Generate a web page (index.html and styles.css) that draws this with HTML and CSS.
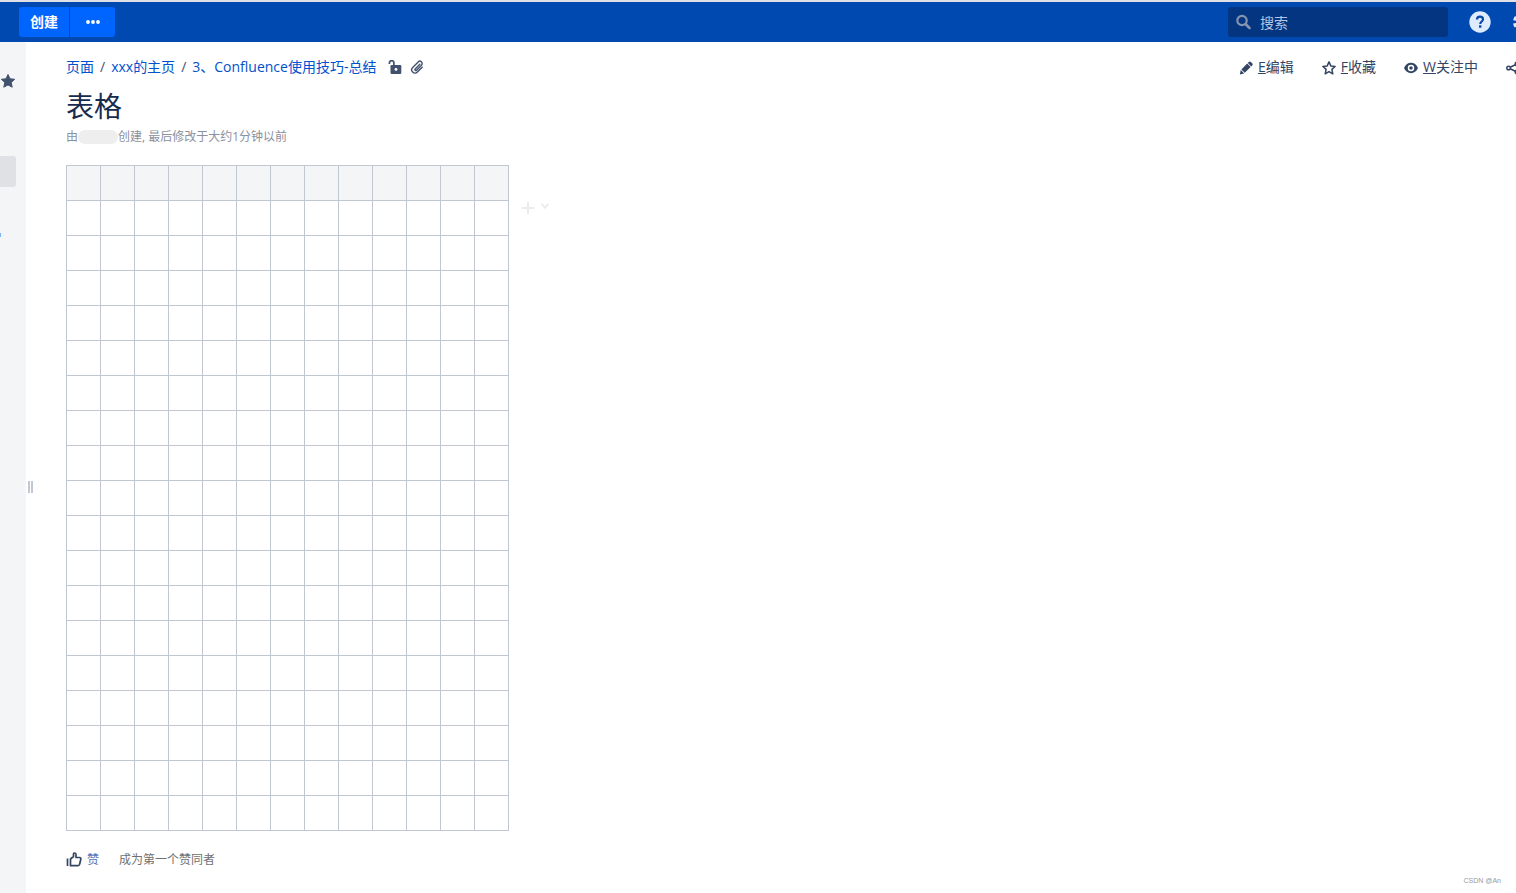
FILE: index.html
```
<!DOCTYPE html>
<html lang="zh-CN">
<head>
<meta charset="utf-8">
<title>表格</title>
<link rel="stylesheet" href="styles.css">
</head>
<body>
<header class="topbar">
  <div class="create-group">
    <button class="create" type="button">创建</button>
    <button class="create more" type="button" aria-label="更多">
      <svg width="14" height="4" viewBox="0 0 14 4" fill="currentColor"><circle cx="2" cy="2" r="1.900"/><circle cx="7" cy="2" r="1.900"/><circle cx="12" cy="2" r="1.900"/></svg>
    </button>
  </div>
  <label class="search">
    <svg width="16" height="16" viewBox="0 0 16 16" fill="none" stroke="currentColor"><circle cx="6" cy="6.500" r="4.700" stroke-width="2.200"/><path d="M9.500 10l4 4" stroke-width="2.600" stroke-linecap="round"/></svg>
    <input type="search" placeholder="搜索" aria-label="搜索">
  </label>
  <button class="icon-button help" type="button" aria-label="帮助">
    <svg width="22" height="22" viewBox="0 0 22 22"><circle cx="11" cy="11" r="10.700" fill="#deebff"/><path d="M8 8.600C8 6.700 9.200 5.700 11 5.700s3 1 3 2.600c0 2.200-2.700 2.300-2.700 4.600" fill="none" stroke="#0747a6" stroke-width="2.200"/><rect x="10" y="14.300" width="2.400" height="2.400" fill="#0747a6"/></svg>
  </button>
  <button class="icon-button settings" type="button" aria-label="设置">
    <svg width="20" height="20" viewBox="0 0 20 20" fill="none" stroke="#deebff"><circle cx="10" cy="10" r="5" stroke-width="4"/><circle cx="10" cy="10" r="8.500" stroke-width="3" stroke-dasharray="3.800 2.876" stroke-dashoffset="-1.440"/></svg>
  </button>
</header>
<div class="workspace">
  <aside class="sidebar">
    <button class="icon-button star" type="button" aria-label="收藏空间">
      <svg width="16" height="16" viewBox="0 0 16 16" fill="currentColor" stroke="currentColor" stroke-linejoin="round"><path d="M8 1.500l2 4.300 4.600.5-3.400 3.200 1 4.700L8 11.900l-4.200 2.300 1-4.700L1.400 6.300 6 5.800z"/></svg>
    </button>
    <div class="selected"></div>
    <div class="mark"></div>
  </aside>
  <div class="splitter"><span class="grip"></span></div>
  <main class="page">
    <div class="page-bar">
      <nav class="crumbs">
        <a href="#">页面</a><span>/</span><a href="#">xxx的主页</a><span>/</span><a href="#">3、Confluence使用技巧-总结</a>
        <svg class="lock" width="14" height="14" viewBox="0 0 14 14"><path d="M1.400 4V2.900a2.200 2.200 0 0 1 4.500 0V6" fill="none" stroke="currentColor" stroke-width="1.700"/><rect x="2.500" y="5" width="10.800" height="9" rx="1.200" fill="currentColor"/><circle cx="8" cy="9.400" r="1.400" fill="#fff"/></svg>
        <svg class="clip" width="14" height="14" viewBox="0 0 14 14" fill="none" stroke="currentColor" stroke-width="1.400" stroke-linecap="round"><path d="M9.800 4.300L5.200 8.900a.9.900 0 0 0 1.300 1.300l5-5a2.300 2.300 0 0 0-3.300-3.300L2.700 7.400a3.300 3.300 0 0 0 4.700 4.700l4.800-4.800"/></svg>
      </nav>
      <div class="actions">
        <a href="#"><svg width="14" height="14" viewBox="0 0 14 14" fill="currentColor"><path d="M.8 13.400l1-4.400 3.400 3.400zM2.400 8.400L8.200 2.600l3.400 3.400-5.800 5.800zM8.800 2l1-1a1.500 1.500 0 0 1 2.100 0l1.300 1.300a1.500 1.500 0 0 1 0 2.100l-1 1z"/></svg><span><u>E</u>编辑</span></a>
        <a href="#"><svg width="14" height="14" viewBox="0 0 14 14" fill="none" stroke="currentColor" stroke-width="1.500" stroke-linejoin="round"><path d="M7 .9l1.800 4 4.300.5-3.200 3 .9 4.400L7 10.600l-3.800 2.200.9-4.400-3.200-3 4.300-.5z"/></svg><span><u>F</u>收藏</span></a>
        <a href="#"><svg width="14" height="14" viewBox="0 0 14 14"><path d="M0 7c1.500-3.400 4-5.200 7-5.200S12.500 3.600 14 7c-1.500 3.400-4 5.200-7 5.200S1.500 10.400 0 7z" fill="currentColor"/><circle cx="7" cy="7" r="2.500" fill="none" stroke="#fff" stroke-width="1.500"/></svg><span><u>W</u>关注中</span></a>
        <a href="#" aria-label="分享"><svg width="14" height="14" viewBox="0 0 14 14" fill="none" stroke="currentColor" stroke-width="1.500"><circle cx="2.600" cy="7" r="1.800"/><circle cx="11" cy="3" r="1.800"/><circle cx="11" cy="11" r="1.800"/><path d="M4.200 6.200l5.200-2.400M4.200 7.800l5.200 2.400"/></svg></a>
      </div>
    </div>
    <h1>表格</h1>
    <p class="byline">由<span class="redacted"></span>创建, 最后修改于大约1分钟以前</p>
    <div class="content">
      <table class="grid">
        <thead>
          <tr><th></th><th></th><th></th><th></th><th></th><th></th><th></th><th></th><th></th><th></th><th></th><th></th><th></th></tr>
        </thead>
        <tbody>
          <tr><td></td><td></td><td></td><td></td><td></td><td></td><td></td><td></td><td></td><td></td><td></td><td></td><td></td></tr>
          <tr><td></td><td></td><td></td><td></td><td></td><td></td><td></td><td></td><td></td><td></td><td></td><td></td><td></td></tr>
          <tr><td></td><td></td><td></td><td></td><td></td><td></td><td></td><td></td><td></td><td></td><td></td><td></td><td></td></tr>
          <tr><td></td><td></td><td></td><td></td><td></td><td></td><td></td><td></td><td></td><td></td><td></td><td></td><td></td></tr>
          <tr><td></td><td></td><td></td><td></td><td></td><td></td><td></td><td></td><td></td><td></td><td></td><td></td><td></td></tr>
          <tr><td></td><td></td><td></td><td></td><td></td><td></td><td></td><td></td><td></td><td></td><td></td><td></td><td></td></tr>
          <tr><td></td><td></td><td></td><td></td><td></td><td></td><td></td><td></td><td></td><td></td><td></td><td></td><td></td></tr>
          <tr><td></td><td></td><td></td><td></td><td></td><td></td><td></td><td></td><td></td><td></td><td></td><td></td><td></td></tr>
          <tr><td></td><td></td><td></td><td></td><td></td><td></td><td></td><td></td><td></td><td></td><td></td><td></td><td></td></tr>
          <tr><td></td><td></td><td></td><td></td><td></td><td></td><td></td><td></td><td></td><td></td><td></td><td></td><td></td></tr>
          <tr><td></td><td></td><td></td><td></td><td></td><td></td><td></td><td></td><td></td><td></td><td></td><td></td><td></td></tr>
          <tr><td></td><td></td><td></td><td></td><td></td><td></td><td></td><td></td><td></td><td></td><td></td><td></td><td></td></tr>
          <tr><td></td><td></td><td></td><td></td><td></td><td></td><td></td><td></td><td></td><td></td><td></td><td></td><td></td></tr>
          <tr><td></td><td></td><td></td><td></td><td></td><td></td><td></td><td></td><td></td><td></td><td></td><td></td><td></td></tr>
          <tr><td></td><td></td><td></td><td></td><td></td><td></td><td></td><td></td><td></td><td></td><td></td><td></td><td></td></tr>
          <tr><td></td><td></td><td></td><td></td><td></td><td></td><td></td><td></td><td></td><td></td><td></td><td></td><td></td></tr>
          <tr><td></td><td></td><td></td><td></td><td></td><td></td><td></td><td></td><td></td><td></td><td></td><td></td><td></td></tr>
          <tr><td></td><td></td><td></td><td></td><td></td><td></td><td></td><td></td><td></td><td></td><td></td><td></td><td></td></tr>
        </tbody>
      </table>
      <button class="icon-button add" type="button" aria-label="添加">
        <svg width="30" height="16" viewBox="0 0 30 16" fill="none" stroke="currentColor" stroke-width="2"><path d="M1 8h12M7 2v12M20.500 4l3.500 3.500L27.500 4"/></svg>
      </button>
    </div>
    <div class="likes">
      <button class="like" type="button">
        <svg width="16" height="16" viewBox="0 0 16 16" fill="none" stroke="#344563" stroke-width="1.700" stroke-linejoin="round"><path d="M1.500 6.500V14M4.500 7L7.500 4.500V2C7.500.6 10 .6 10 2.500v3h3.300c1.200 0 1.700.8 1.500 1.700l-1.200 5c-.3 1-.8 1.500-1.800 1.500H4.500z"/></svg>
        赞
      </button>
      <span>成为第一个赞同者</span>
    </div>
  </main>
</div>
<div class="watermark">CSDN @An</div>
</body>
</html>
```
FILE: styles.css
```
* { box-sizing: border-box; }
body {
  margin: 0;
  min-height: 100vh;
  display: flex;
  flex-direction: column;
  overflow: hidden;
  background: #fff;
  color: #172b4d;
  font: 14px/20px "Open Sans", "Noto Sans CJK SC", sans-serif;
}
button, input { font: inherit; }
svg { display: block; flex: none; }
a { color: #0052cc; text-decoration: none; }
.icon-button { display: block; padding: 0; border: 0; background: none; color: inherit; flex: none; }

.topbar {
  display: flex;
  align-items: center;
  height: 42px;
  padding: 2px 0 0 19px;
  border-top: 2px solid #dfe1e6;
  background: #0049b0;
}
.create-group { display: flex; gap: 1px; margin-bottom: 2px; }
.create {
  width: 50px;
  height: 30px;
  padding: 0;
  border: 0;
  border-radius: 3px 0 0 3px;
  background: #0065ff;
  color: #fff;
  font-weight: 700;
}
.more { display: flex; align-items: center; justify-content: center; width: 45px; border-radius: 0 3px 3px 0; }
.search {
  display: flex;
  align-items: center;
  gap: 8px;
  width: 220px;
  height: 30px;
  margin: 0 21px 2px auto;
  padding: 0 8px;
  border-radius: 3px;
  background: #043580;
  color: #8493ae;
}
.search input { flex: 1; min-width: 0; padding: 1px 0 0; border: 0; outline: 0; background: none; color: #deebff; }
.search input::placeholder { color: #b3c5e4; opacity: 1; }
.help { margin: 0 22px 2px 0; }
.settings { margin: 0 -17px 2px 0; }

.workspace { flex: 1; display: flex; }
.sidebar { width: 26px; padding-top: 31px; background: #f4f5f7; color: #42526e; }
.selected { width: 16px; height: 31px; margin-top: 67px; border-radius: 0 3px 3px 0; background: #dfe1e5; }
.mark { width: 1px; height: 4px; margin-top: 46px; background: #79b8f3; }
.splitter { display: flex; width: 40px; padding: 0 0 2px 2px; align-items: center; }
.grip { width: 5px; height: 12px; margin-top: 40px; border: solid #c1c7d5; border-width: 0 2px; }

.page { flex: 1; min-width: 0; padding-top: 15px; }
.page-bar { display: flex; justify-content: space-between; }
.crumbs { display: flex; align-items: center; color: #42526e; }
.crumbs span { margin: 0 6px; }
.lock { margin-left: 12px; }
.clip { margin-left: 8px; }
.actions { display: flex; gap: 28px; margin-right: -4px; }
.actions a { display: flex; align-items: center; gap: 5px; color: #344563; }
.actions svg { margin-top: 1px; }
h1 { margin: 13px 0 0; font-size: 28px; line-height: 32px; font-weight: 400; }
.byline { display: flex; align-items: center; margin: 5px 0 0; color: #8b919d; font-size: 12px; line-height: 20px; white-space: pre; }
.redacted { width: 40px; height: 14px; border-radius: 7px; background: #eee; }
.content { display: flex; margin-top: 18px; }
.grid { border-collapse: collapse; }
.grid th, .grid td { width: 34px; height: 35px; padding: 0; border: 1px solid #c1c7d0; }
.grid th { background: #f4f5f7; }
.add { align-self: flex-start; margin: 35px 0 0 12px; color: #ebecf0; }
.likes { display: flex; gap: 20px; margin-top: 19px; color: #707070; font-size: 12px; }
.like { display: flex; align-items: center; gap: 5px; padding: 0; border: 0; background: none; color: #5b75b5; }
.watermark { position: absolute; right: 15px; bottom: 6px; color: #999; font: 7px/12px "Liberation Sans", sans-serif; }
```
